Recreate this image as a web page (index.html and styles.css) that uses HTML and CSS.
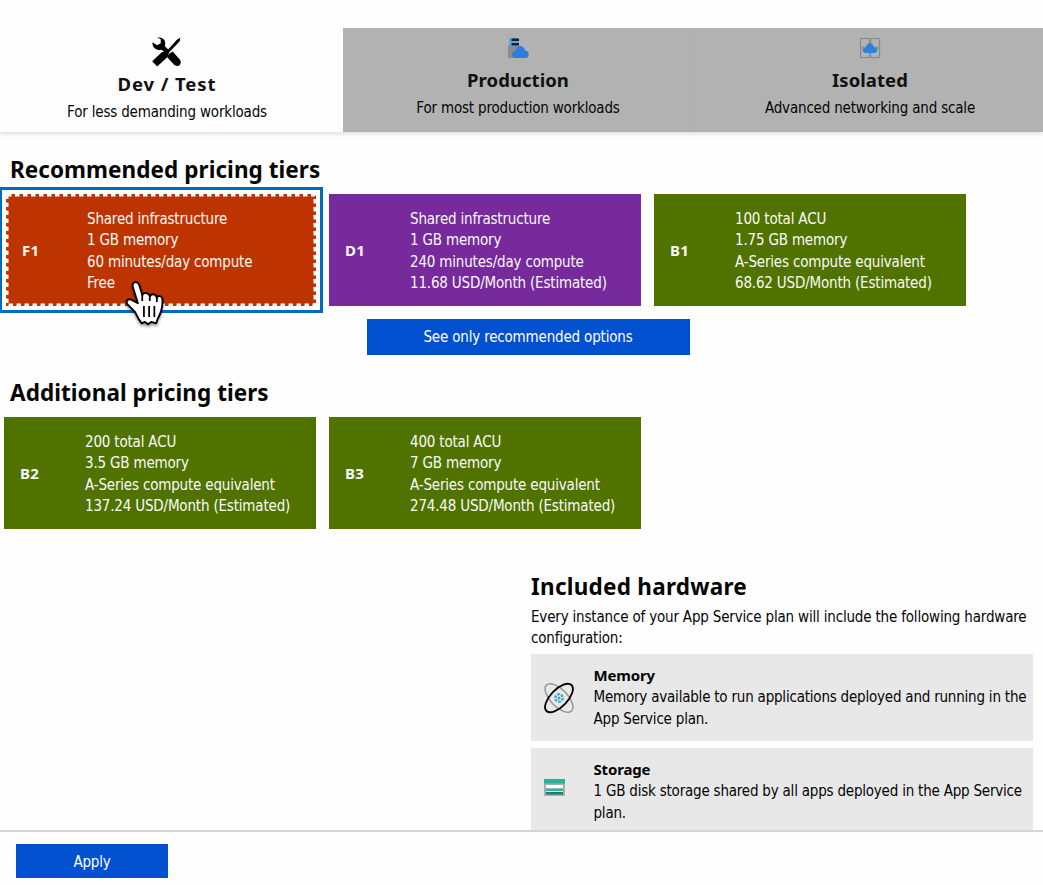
FILE: index.html
```html
<!DOCTYPE html>
<html lang="en">
<head>
<meta charset="utf-8">
<title>App Service plan pricing</title>
<link rel="stylesheet" href="styles.css">
</head>
<body>
<div class="page">
  <nav class="tabs">
    <div class="tab tab-active">
      <svg class="icon-tools" width="30" height="30" viewBox="0 0 30 30">
        <path d="M.6 5.2 5 8.3 8.8 6.2 8.6 2 5.1.8C9-.6 13.6 2 13.2 6.7l-.3 2.6 3.6 3.4-3.4 3-3.5-3C5 14.2-.5 10.3.6 5.2Z"/>
        <path d="M17.2 16.8 20.6 14.5 27.6 22.2Q29.8 25 27.8 27.9 24.8 30.4 21.9 27.6L15 20Z"/>
        <path d="M16.6 12 25.1 2.4 28.4.8 27.7 4.3 18.4 14 17.2 15.3 15.5 20 5.2 29.6.2 24.3 9.8 15.2 14.1 14.3Z"/>
      </svg>
      <h2>Dev / Test</h2>
      <p>For less demanding workloads</p>
    </div>
    <div class="tab">
      <svg class="icon-small" width="22" height="22" viewBox="0 0 22 22">
        <path d="M1 8h10v13H1Z" fill="#8c8c8c"/>
        <rect x="2" y="1" width="10" height="8" rx="1" fill="#58a9d2"/>
        <path d="M4.5 1.5h7.5v2.5H4.5zM4.5 6h7.5v2.5H4.5z" fill="#0c2443"/>
        <path d="M8.5 21C3.7 20.8 4 14.2 8.4 14 9.3 7.7 17 7.4 18.1 13.6 23 14.3 22.8 20.8 18 21Z" fill="#2c7ddd"/>
      </svg>
      <h2>Production</h2>
      <p>For most production workloads</p>
    </div>
    <div class="tab tab-last">
      <svg class="icon-small" width="22" height="22" viewBox="0 0 22 22">
        <path d="M1.5 1.5h8.8v8.8H1.5zM11.8 1.5h8.8v8.8h-8.8zM1.5 11.8h8.8v8.8H1.5zM11.8 11.8h8.8v8.8h-8.8z" fill="none" stroke="#858585"/>
        <path d="M6.8 16C2.7 15.8 3 11.3 6.6 11.1 7.5 4.7 13.8 4.5 15 10.4 19.2 10.8 19.2 15.8 15.2 16Z" fill="#2c82dd"/>
      </svg>
      <h2>Isolated</h2>
      <p>Advanced networking and scale</p>
    </div>
  </nav>

  <main class="content">
    <h1>Recommended pricing tiers</h1>
    <section class="tiers">
      <article class="tier tier-free">
        <svg class="dash" width="310" height="112"><rect x="1" y="1" width="308" height="110"/></svg>
        <b>F1</b>
        <div>Shared infrastructure<br>1 GB memory<br>60 minutes/day compute<br>Free</div>
        <svg class="cursor" width="46" height="50" viewBox="0 0 44 48">
          <path d="M12 4C8.8 4.2 8.7 7 9.8 10.2L14.2 24.2 7.8 20.8C4.4 19.5 2.3 22.3 4 25L11.4 32.6 15 39.5 17.8 43.5 21 42.2 24 44.5 27 42.2 31.8 43.5 33.2 39.4C36.2 34 38.2 28 37.8 20.8 37.6 16.5 33.3 16.6 32.4 18.9 31.3 14.8 27.4 14.8 25.8 17.5 24.2 13.7 20.2 13.5 18.4 16.2L15.7 7.1C14.8 4.7 13.6 3.9 12 4Z" fill="#fff" stroke="#000" stroke-width="1.8" stroke-linejoin="round"/>
          <path d="M18.4 16v6M25.6 17v5M32.4 18.5v4.5M20 27v10.5M25 27v10.5M30 27v10.5" fill="none" stroke="#000" stroke-width="1.7"/>
        </svg>
      </article>
      <article class="tier tier-shared"><b>D1</b><div>Shared infrastructure<br>1 GB memory<br>240 minutes/day compute<br>11.68 USD/Month (Estimated)</div></article>
      <article class="tier"><b>B1</b><div>100 total ACU<br>1.75 GB memory<br>A-Series compute equivalent<br>68.62 USD/Month (Estimated)</div></article>
    </section>
    <button class="btn btn-toggle">See only recommended options</button>

    <h1 class="additional">Additional pricing tiers</h1>
    <section class="tiers">
      <article class="tier"><b>B2</b><div>200 total ACU<br>3.5 GB memory<br>A-Series compute equivalent<br>137.24 USD/Month (Estimated)</div></article>
      <article class="tier"><b>B3</b><div>400 total ACU<br>7 GB memory<br>A-Series compute equivalent<br>274.48 USD/Month (Estimated)</div></article>
    </section>

    <section class="hardware">
      <h1>Included hardware</h1>
      <p class="intro">Every instance of your App Service plan will include the following hardware configuration:</p>
      <div class="item">
        <svg width="32" height="32" viewBox="0 0 32 32">
          <g fill="none"><ellipse cx="16" cy="16" rx="18" ry="8.5" transform="rotate(46 16 16)" stroke="#969696" stroke-width="1.5"/>
          <circle cx="16" cy="16" r="3.7" stroke="#3aa9cf" stroke-width="2.4" stroke-dasharray="2.6 1.2"/>
          <circle cx="16" cy="16" r="1.5" fill="#3aa9cf"/>
          <ellipse cx="16" cy="16" rx="18" ry="8.5" transform="rotate(-46 16 16)" stroke="#080808" stroke-width="1.9"/></g>
        </svg>
        <div><b>Memory</b><p>Memory available to run applications deployed and running in the App Service plan.</p></div>
      </div>
      <div class="item item-storage">
        <svg width="32" height="32" viewBox="0 0 32 32">
          <path d="M1 6h21v13H1Z" fill="#a9aeac"/>
          <path d="M1 2h21v4.5H1Z" fill="#27b298"/>
          <path d="M3 8h17v3.5H3Z" fill="#fff"/>
          <path d="M3 11.5h17V14H3Z" fill="#2fb69f"/>
          <path d="M3 14h17v1H3Z" fill="#d5eeea"/>
          <path d="M3 15h17v2.5H3Z" fill="#28776e"/>
        </svg>
        <div><b>Storage</b><p>1 GB disk storage shared by all apps deployed in the App Service plan.</p></div>
      </div>
    </section>
  </main>
  <footer class="footer"><button class="btn btn-apply">Apply</button></footer>
</div>
</body>
</html>
```
FILE: styles.css
```css
* { box-sizing: border-box; }
body {
  margin: 0;
  background: #fefefe;
  color: #050505;
  font: 400 condensed 15px/21.4px "DejaVu Sans Condensed", "DejaVu Sans", sans-serif;
  letter-spacing: -0.18px;
}
h1, h2, p { margin: 0; }
h1, h2, b { font-family: "Noto Sans", sans-serif; font-stretch: normal; font-weight: 700; }
h1 { font-size: 22.5px; line-height: 30px; letter-spacing: 0.06px; }
h2 { font-size: 18.5px; line-height: 25px; letter-spacing: 0.05px; color: #111; }
b { font-size: 15px; letter-spacing: -0.15px; }
svg { display: block; flex: none; }

.page { height: 885px; display: flex; flex-direction: column; overflow: hidden; }
.tabs { display: grid; grid-template-columns: 343px 350px 350px; height: 132px; padding-top: 28px; flex: none; box-shadow: 0 2px 5px rgba(0, 0, 0, .13); }
.tab { display: flex; flex-direction: column; align-items: center; padding-top: 9px; background: #b2b2b2; }
.tab-active { background: #fefefe; padding: 9px 9px 0 0; }
.tab-last { padding-left: 3px; border-left: 1px solid #aeaeae; }
.icon-small { margin-bottom: 8px; }
.icon-tools { margin-bottom: 4px; }
.tab p { margin-top: 6px; }
.tab-active h2 { letter-spacing: 0.9px; }

.content { flex: 1; min-height: 0; overflow: hidden; padding: 23px 10px 0 4px; }
.content h1 { padding-left: 6px; }
.tiers { display: grid; grid-template-columns: repeat(3, 312px); gap: 13px; margin-top: 9px; }
.tier { position: relative; height: 112px; display: grid; grid-template-columns: 65px 1fr; align-items: center; padding: 0 0 0 16px; background: #507300; color: #f9f9f9; }
.tier > div { padding-top: 3px; }
.tier b { padding-top: 2px; letter-spacing: 0.3px; }
.tier-free { margin-left: 2px; background: #bd3400; outline: 3px solid #006bbf; outline-offset: 4px; }
.tier-shared { background: #762a9c; }
.dash { position: absolute; top: 0; left: 0; }
.dash rect { fill: none; stroke: #fff; stroke-width: 3; stroke-dasharray: 4.5 3.5; }
.cursor { position: absolute; top: 84px; left: 117px; filter: drop-shadow(0 2px 1.5px rgba(0, 0, 0, .4)); }

.btn { display: block; border: 0; border-radius: 0; padding: 2px 0 0; background: #0050d0; color: #fff; font: inherit; letter-spacing: inherit; }
.btn-toggle { width: 323px; height: 36px; margin: 13px 0 0 362.5px; }
.additional { margin-top: 23px; }
.hardware { width: 502px; margin: 43px 0 0 527px; }
.hardware h1 { padding-left: 0; letter-spacing: 0.25px; }
.intro { margin-bottom: 4px; padding-top: 5px; }
.item { display: flex; gap: 18.5px; height: 87px; padding: 11px 0 0 12px; margin-bottom: 7px; background: #e8e8e8; }
.item svg { margin-top: 17px; overflow: visible; }
.item-storage svg { margin-top: 18px; }
.item b { display: block; }
.item p { margin-top: 1px; letter-spacing: -0.21px; }
.footer { flex: none; height: 55px; border-top: 2px solid #d4d6d6; padding: 12px 16px; }
.btn-apply { width: 152px; height: 34px; padding-top: 4px; }
```
